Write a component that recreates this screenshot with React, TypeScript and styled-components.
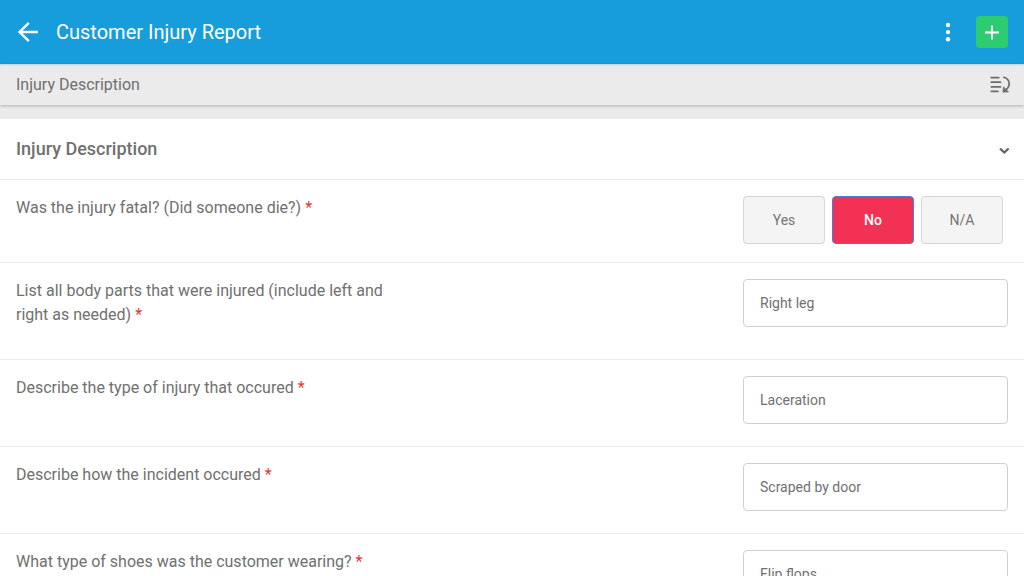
import React, { useState } from 'react';
import styled, { createGlobalStyle } from 'styled-components';

const GlobalStyle = createGlobalStyle`
  *, *::before, *::after { box-sizing: border-box; }
  body {
    margin: 0;
    background: #fff;
    color: #707070;
    font-family: Roboto, "Liberation Sans", sans-serif;
    font-size: 16px;
    line-height: 24px;
  }
`;

const Shell = styled.div`
  display: flex;
  flex-direction: column;
  height: 100vh;
`;

const AppBar = styled.header`
  display: flex;
  align-items: center;
  flex: none;
  height: 64px;
  padding: 0 16px;
  background: #179ddb;
  color: #fff;
`;

const IconButton = styled.button`
  display: flex;
  align-items: center;
  justify-content: center;
  flex: none;
  width: 24px;
  height: 24px;
  padding: 0;
  border: 0;
  background: none;
  color: inherit;
  cursor: pointer;
`;

const Title = styled.h1`
  flex: 1;
  margin: 0 16px;
  font-size: 20px;
  font-weight: 400;
`;

const AddButton = styled(IconButton)`
  width: 32px;
  height: 32px;
  margin-left: 16px;
  border-radius: 4px;
  background: #2ecc71;
`;

const SectionBar = styled.nav`
  position: relative;
  display: flex;
  align-items: center;
  justify-content: space-between;
  flex: none;
  height: 41px;
  padding: 0 12px 0 16px;
  background: #ebebeb;
  box-shadow: inset 0 2px 2px -1px #c4d0d8, 0 1px 3px rgba(0, 0, 0, 0.25);
`;

const Content = styled.main`
  flex: 1;
  min-height: 0;
  overflow-y: auto;
  scrollbar-width: none;
  border-top: 14px solid #ebebeb;
`;

const SectionHeader = styled.div`
  display: flex;
  align-items: center;
  justify-content: space-between;
  height: 61px;
  padding: 0 8px 0 16px;
  border-bottom: 1px solid #ececec;
`;

const SectionTitle = styled.h2`
  margin: 0;
  font-size: 18px;
  font-weight: 500;
`;

const Row = styled.div`
  display: flex;
  align-items: flex-start;
  justify-content: space-between;
  padding: 16px;
  border-bottom: 1px solid #ececec;
`;

const Question = styled.label`
  flex: 0 1 384px;
  padding-bottom: 16px;
`;

const Required = styled.span`
  color: #e0392f;
`;

const Control = styled.div`
  flex: none;
  width: 265px;
  padding-bottom: 6px;
`;

const Choices = styled.div`
  display: flex;
  flex: none;
  gap: 7px;
  width: 265px;
  padding-bottom: 2px;
`;

const Choice = styled.button<{ $selected: boolean }>`
  width: 82px;
  height: 48px;
  padding: 0;
  border: 1px solid ${p => (p.$selected ? '#4a7fd0' : '#d5d5d5')};
  border-radius: 4px;
  background: ${p => (p.$selected ? '#f33155' : '#f4f4f4')};
  color: ${p => (p.$selected ? '#fff' : '#757575')};
  font-family: inherit;
  font-size: 14px;
  font-weight: ${p => (p.$selected ? 500 : 400)};
  cursor: pointer;
`;

const TextField = styled.input`
  display: block;
  width: 100%;
  height: 48px;
  padding: 0 16px;
  border: 1px solid #d0d0d0;
  border-radius: 4px;
  background: #fff;
  color: #707070;
  font-family: inherit;
  font-size: 14px;
`;

const fields = [
  { id: 'body-parts', label: 'List all body parts that were injured (include left and right as needed)', value: 'Right leg' },
  { id: 'injury-type', label: 'Describe the type of injury that occured', value: 'Laceration' },
  { id: 'incident', label: 'Describe how the incident occured', value: 'Scraped by door' },
  { id: 'shoes', label: 'What type of shoes was the customer wearing?', value: 'Flip flops' },
];

const BackIcon = () => (
  <svg width="24" height="24" viewBox="0 0 24 24" fill="none" stroke="currentColor" strokeWidth="2.4">
    <path d="M22 12H4M12.8 2.8 3.6 12l9.2 9.2" />
  </svg>
);

const MoreIcon = () => (
  <svg width="24" height="24" viewBox="0 0 24 24" fill="currentColor">
    <circle cx="12" cy="5" r="2.2" />
    <circle cx="12" cy="12.1" r="2.2" />
    <circle cx="12" cy="19.2" r="2.2" />
  </svg>
);

const PlusIcon = () => (
  <svg width="16" height="16" viewBox="0 0 16 16" fill="none" stroke="currentColor" strokeWidth="1.8">
    <path d="M8 1.5v14M1 8.5h14" />
  </svg>
);

const JumpIcon = () => (
  <svg width="24" height="24" viewBox="0 0 24 24" fill="none" stroke="#6c6c6c" strokeWidth="1.7" strokeLinecap="round">
    <path d="M3.3 4.6h7.400M3.300 9.200h9.200M3.300 13.800h9.200M3.300 18.400h6.600" />
    <path d="M15.800 4.300c3.600 1 5.400 3.600 5.400 6.700 0 3-1.900 5.400-5.600 7.500" />
    <path d="M15.500 14.200l-.5 4.800 5.200-.1z" fill="#6c6c6c" strokeWidth="0.800" strokeLinejoin="round" />
  </svg>
);

const ChevronIcon = () => (
  <svg width="24" height="24" viewBox="0 0 24 24" fill="none" stroke="#606060" strokeWidth="2.2">
    <path d="M8 11.5l4.300 4 4.300-4" />
  </svg>
);

export default function App() {
  const [fatal, setFatal] = useState('No');
  return (
    <Shell>
      <GlobalStyle />
      <AppBar>
        <IconButton aria-label="Back"><BackIcon /></IconButton>
        <Title>Customer Injury Report</Title>
        <IconButton aria-label="More options"><MoreIcon /></IconButton>
        <AddButton aria-label="Add"><PlusIcon /></AddButton>
      </AppBar>
      <SectionBar>
        <span>Injury Description</span>
        <IconButton aria-label="Jump to section"><JumpIcon /></IconButton>
      </SectionBar>
      <Content>
        <SectionHeader>
          <SectionTitle>Injury Description</SectionTitle>
          <IconButton aria-label="Collapse section"><ChevronIcon /></IconButton>
        </SectionHeader>
        <Row>
          <Question as="div" id="fatal-label">
            Was the injury fatal? (Did someone die?) <Required>*</Required>
          </Question>
          <Choices role="group" aria-labelledby="fatal-label">
            {['Yes', 'No', 'N/A'].map(option => (
              <Choice
                key={option}
                type="button"
                $selected={fatal === option}
                aria-pressed={fatal === option}
                onClick={() => setFatal(option)}
              >
                {option}
              </Choice>
            ))}
          </Choices>
        </Row>
        {fields.map(field => (
          <Row key={field.id}>
            <Question htmlFor={field.id}>
              {field.label} <Required>*</Required>
            </Question>
            <Control>
              <TextField id={field.id} type="text" defaultValue={field.value} required />
            </Control>
          </Row>
        ))}
      </Content>
    </Shell>
  );
}
